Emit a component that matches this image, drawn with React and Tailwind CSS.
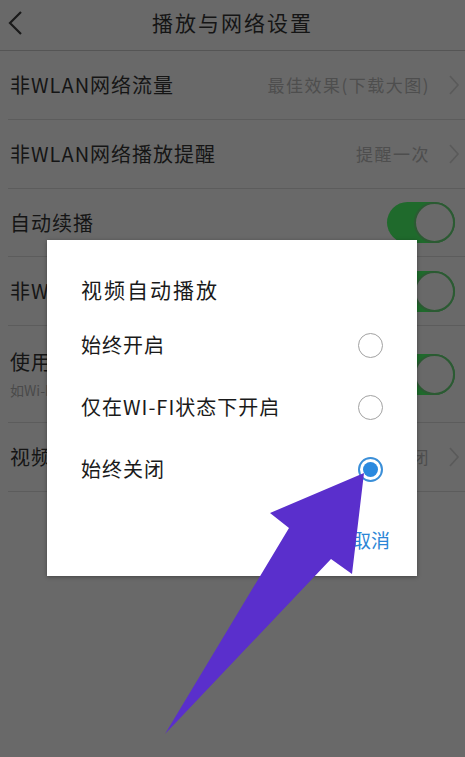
import React from 'react';

const font = { fontFamily: "'Noto Sans CJK SC', 'Noto Sans', sans-serif" };

function Chevron() {
  return (
    <svg width="12" height="22" viewBox="0 0 12 22" className="shrink-0">
      <path d="M2 2 L10 11 L2 20" fill="none" stroke="#5a5a5a" strokeWidth="1.6" />
    </svg>
  );
}

function Toggle() {
  return (
    <div className="relative w-[68px] h-[41px] rounded-full bg-[#1f6a2c] shrink-0 mr-[5px]">
      <div className="absolute right-0 top-0 w-[41px] h-[41px] rounded-full bg-[#696969] border-[2px] border-[#2c5a33]" />
    </div>
  );
}

function Row({ label, value, toggle, sub, h = 'h-[68px]' }) {
  return (
    <div className={`ml-[8px] ${h} border-b border-[#5c5c5c] flex items-center pl-[2px] pr-[5px]`}>
      <div className="flex-1 min-w-0">
        <div className="text-[20px] tracking-[1px] text-[#151515] leading-[28px] whitespace-nowrap">{label}</div>
        {sub && <div className="text-[14px] text-[#4a4a4a] leading-[20px] mt-[4px]">{sub}</div>}
      </div>
      {value && (
        <div className="flex items-center gap-[18px]">
          <span className="text-[17px] tracking-[1.5px] text-[#4e4e4e]">{value}</span>
          <Chevron />
        </div>
      )}
      {toggle && <Toggle />}
    </div>
  );
}

function Radio({ checked }) {
  if (checked) {
    return (
      <div className="w-[25px] h-[25px] rounded-full border-[2px] border-[#3b8fd8] flex items-center justify-center">
        <div className="w-[15px] h-[15px] rounded-full bg-[#2a89df]" />
      </div>
    );
  }
  return <div className="w-[25px] h-[25px] rounded-full border-[1.5px] border-[#a2a2a2]" />;
}

export default function App() {
  const options = [
    { label: '始终开启', checked: false },
    { label: '仅在WI-FI状态下开启', checked: false },
    { label: '始终关闭', checked: true },
  ];

  return (
    <div className="relative w-[465px] h-[757px] overflow-hidden bg-[#696969]" style={font}>
      {/* dimmed settings page */}
      <div className="flex flex-col">
        <div className="h-[51px] border-b border-[#555555] grid grid-cols-[40px_1fr_40px] items-center">
          <svg width="16" height="26" viewBox="0 0 16 26" className="ml-[7px] mb-[4px]">
            <path d="M14 2 L3 13 L14 24" fill="none" stroke="#1a1a1a" strokeWidth="2.2" />
          </svg>
          <div className="text-center text-[21px] tracking-[2px] text-[#151515] mb-[4px]">播放与网络设置</div>
          <div />
        </div>
        <Row label="非WLAN网络流量" value="最佳效果(下载大图)" h="h-[69px]" />
        <Row label="非WLAN网络播放提醒" value="提醒一次" h="h-[69px]" />
        <Row label="自动续播" toggle />
        <Row label="非WLAN网络自动播放" toggle h="h-[69px]" />
        <Row label="使用移动网络时节省流量" sub="如Wi-Fi下自动下载更新" toggle h="h-[97px]" />
        <Row label="视频自动播放" value="始终关闭" h="h-[69px]" />
      </div>

      {/* dialog */}
      <div className="absolute left-[47px] top-[240px] w-[370px] h-[336px] bg-white shadow-[0_1px_4px_rgba(0,0,0,0.35)] flex flex-col pt-[35px] px-[34px]">
        <div className="text-[21px] tracking-[2px] leading-[28px] text-[#1a1a1a] mb-[11px]">视频自动播放</div>
        {options.map((o) => (
          <div key={o.label} className="h-[62px] flex items-center justify-between">
            <span className="text-[20px] tracking-[1px] text-[#1a1a1a]">{o.label}</span>
            <Radio checked={o.checked} />
          </div>
        ))}
        <div className="mt-[20px] h-[40px] flex items-center justify-end -mr-[7px]">
          <span className="text-[19px] text-[#2b86d6]">取消</span>
        </div>
      </div>

      {/* annotation arrow */}
      <svg className="absolute inset-0 pointer-events-none" width="465" height="757" viewBox="0 0 465 757">
        <polygon
          points="364,473 270,513 289,528 165,734 331,559 352,574"
          fill="#5a2fcc"
        />
      </svg>
    </div>
  );
}
